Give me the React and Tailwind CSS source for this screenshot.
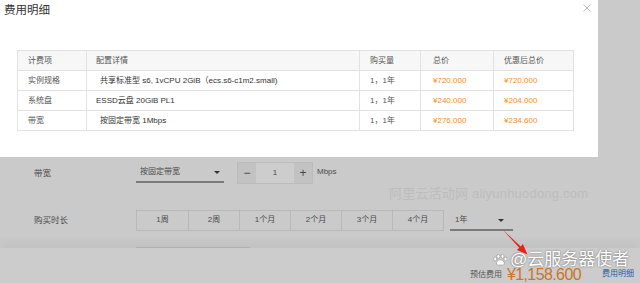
import React from 'react';

const rows = [
  { item: '实例规格', detail: '共享标准型 s6, 1vCPU 2GiB（ecs.s6-c1m2.small)', pad: 'pl-[13px]', qty: '1，1年', total: '¥720.000', final: '¥720.000' },
  { item: '系统盘', detail: 'ESSD云盘 20GiB PL1', pad: 'pl-[9px]', qty: '1，1年', total: '¥240.000', final: '¥204.000' },
  { item: '带宽', detail: '按固定带宽 1Mbps', pad: 'pl-[13px]', qty: '1，1年', total: '¥276.000', final: '¥234.600' },
];

const durations = ['1周', '2周', '1个月', '2个月', '3个月', '4个月'];

// small dark triangle used by the fake selects
const Caret = () => (
  <span className="w-0 h-0 border-l-[3px] border-r-[3px] border-t-[3px] border-l-transparent border-r-transparent border-t-[#333]" />
);

const App = () => {
  return (
    <div className="relative w-[640px] h-[283px] overflow-hidden bg-[#cacaca] font-['Liberation_Sans','Noto_Sans_CJK_SC',sans-serif]">
      {/* cost detail dialog */}
      <div className="relative w-[598px] h-[157px] bg-white">
        <div className="h-[20px] pl-[4px] pt-[2px] text-[11.5px] leading-[16px] text-[#333]">费用明细</div>
        <button className="absolute left-[583px] top-[4px] w-[8px] h-[8px]">
          <svg width="8" height="8" viewBox="0 0 8 8">
            <path d="M0.5 0.5 L7.5 7.5 M7.5 0.5 L0.5 7.5" stroke="#b5b5b5" strokeWidth="0.9" />
          </svg>
        </button>

        <div className="ml-[17px] mt-[30px] w-[557px] border border-[#e2e2e2] text-[8px] leading-[19px]">
          <div className="grid grid-cols-[69px_273px_61px_73px_79px] h-[19px] bg-[#f7f7f7] text-[#555]">
            <div className="pl-[10px] border-r border-[#e2e2e2]">计费项</div>
            <div className="pl-[9px] border-r border-[#e2e2e2]">配置详情</div>
            <div className="pl-[10px] border-r border-[#e2e2e2]">购买量</div>
            <div className="pl-[12px] border-r border-[#e2e2e2]">总价</div>
            <div className="pl-[10px]">优惠后总价</div>
          </div>
          {rows.map((r) => (
            <div key={r.item} className="grid grid-cols-[69px_273px_61px_73px_79px] h-[20px] border-t border-[#e2e2e2]">
              <div className="pl-[10px] border-r border-[#e2e2e2] text-[#555]">{r.item}</div>
              <div className={`${r.pad} border-r border-[#e2e2e2] text-[#333]`}>{r.detail}</div>
              <div className="pl-[10px] border-r border-[#e2e2e2] text-[#555]">{r.qty}</div>
              <div className="pl-[12px] border-r border-[#e2e2e2] text-[#ff8a1e]">{r.total}</div>
              <div className="pl-[10px] text-[#ff8a1e]">{r.final}</div>
            </div>
          ))}
        </div>
      </div>

      {/* page under the overlay */}
      <div className="relative h-[91px] overflow-hidden text-[8.5px] text-[#4a4a4a]">
        <div className="flex items-center mt-[5px] h-[22px]">
          <div className="w-[136px] pl-[34px]">带宽</div>
          <div className="w-[88px] h-[20px] flex items-center justify-between pl-[4px] pr-[4px] border-b-2 border-[#7b7b7b] text-[8px]">
            <span>按固定带宽</span>
            <Caret />
          </div>
          <div className="ml-[13px] flex h-[22px] border border-[#bcbcbc]">
            <div className="w-[18px] flex items-center justify-center bg-[#c2c2c2] text-[12px] text-[#444]">−</div>
            <div className="w-[38px] flex items-center justify-center bg-[#cdcdcd] text-[8px]">1</div>
            <div className="w-[18px] flex items-center justify-center bg-[#c2c2c2] text-[12px] text-[#444]">+</div>
          </div>
          <div className="ml-[4px] text-[8px] -mt-[3px]">Mbps</div>
        </div>

        <div className="flex items-center mt-[25px]">
          <div className="w-[136px] pl-[34px]">购买时长</div>
          <div className="flex border border-[#b9b9b9]">
            {durations.map((d, i) => (
              <div
                key={d}
                className={`w-[51px] h-[19px] flex items-center justify-center text-[8px] ${i > 0 ? 'border-l border-[#b9b9b9]' : ''}`}
              >
                {d}
              </div>
            ))}
          </div>
          <div className="ml-[6px] w-[63px] h-[20px] flex items-center justify-between pl-[5px] pr-[9px] border-b-2 border-[#7b7b7b] text-[8px] mt-[2px]">
            <span>1年</span>
            <Caret />
          </div>
        </div>

        <div className="flex mt-[16px] ml-[136px]">
          <div className="w-[57px] h-[20px] border border-[#b9b9b9]" />
          <div className="w-[57px] h-[20px] border border-l-0 border-[#b9b9b9]" />
        </div>

        {/* site watermark */}
        <div className="absolute left-[389px] top-[27px] text-[13px] text-[#bdbdbd] tracking-[0.2px]">
          阿里云活动网 aliyunhuodong.com
        </div>
      </div>

      {/* footer bar */}
      <div className="relative h-[35px] bg-[#cccccc] shadow-[0_-5px_10px_rgba(0,0,0,0.05)] flex items-end justify-end pr-[6px]">
        <span className="text-[8px] text-[#555] mb-[2px]">预估费用</span>
        <span className="ml-[5px] mb-[2px] text-[16px] leading-[13px] text-[#cc7527] tracking-[-0.6px]">¥1,158.600</span>
        <span className="ml-[21px] text-[8px] text-[#2a5ca8] mb-[3px]">费用明细</span>
      </div>

      {/* red arrow annotation */}
      <svg className="absolute left-[498px] top-[226px]" width="34" height="32" viewBox="0 0 34 32">
        <polygon points="5,4 22.8,20.4 24.9,17.9 29.5,28.5 18.9,24 21.2,21.8" fill="#e8231c" />
      </svg>

      {/* author watermark */}
      <div className="absolute left-[493px] top-[251px] flex items-center text-white text-[17px] leading-[17px] [text-shadow:0_0_2px_rgba(0,0,0,0.55)]">
        <svg width="15" height="12" viewBox="0 0 15 12" className="mr-[2px]">
          <g fill="#fff" stroke="#8a8a8a" strokeWidth="0.6">
            <ellipse cx="2.2" cy="5" rx="1.6" ry="2" />
            <ellipse cx="5.3" cy="2.3" rx="1.6" ry="2" />
            <ellipse cx="9.5" cy="2.3" rx="1.6" ry="2" />
            <ellipse cx="12.6" cy="5" rx="1.6" ry="2" />
            <path d="M7.4 5.8 C4.5 5.8 3 8.5 3.6 10.2 C4.2 11.6 6 11 7.4 11 C8.8 11 10.6 11.6 11.2 10.2 C11.8 8.5 10.3 5.8 7.4 5.8 Z" />
          </g>
        </svg>
        <span>@云服务器使者</span>
      </div>
    </div>
  );
};

export default App;
